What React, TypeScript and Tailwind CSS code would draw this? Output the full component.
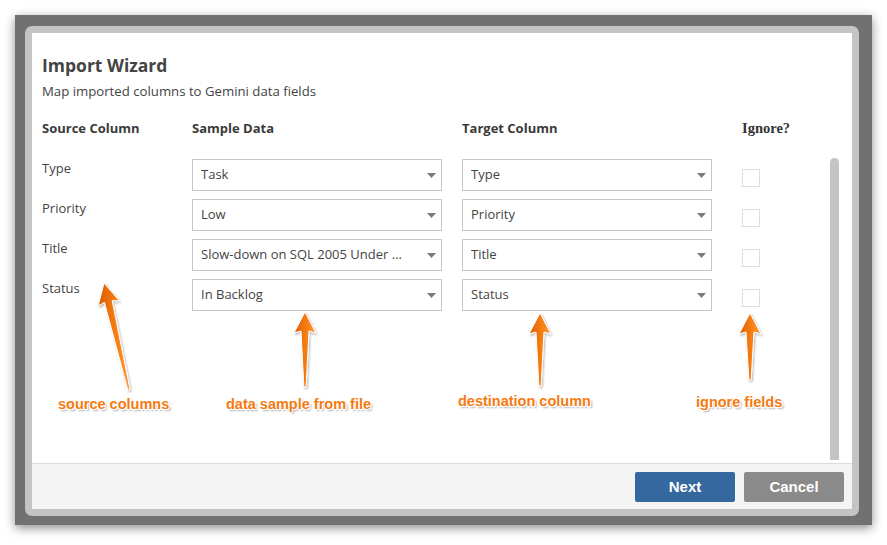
import React from "react";

type Pt = [number, number];

const rows = [
  { source: "Type", sample: "Task", target: "Type" },
  { source: "Priority", sample: "Low", target: "Priority" },
  { source: "Title", sample: "Slow-down on SQL 2005 Under ...", target: "Title" },
  { source: "Status", sample: "In Backlog", target: "Status" },
];

const arrows: { tip: Pt; tail: Pt }[] = [
  { tip: [104, 283], tail: [129, 390] },
  { tip: [305, 312], tail: [305, 387] },
  { tip: [540, 313], tail: [540, 386] },
  { tip: [750, 313], tail: [750, 380] },
];

// tapering arrow: wide head at the tip, thin tail
function arrowPath(tip: Pt, tail: Pt) {
  const dx = tail[0] - tip[0];
  const dy = tail[1] - tip[1];
  const len = Math.hypot(dx, dy);
  const ux = dx / len;
  const uy = dy / len;
  const px = -uy;
  const py = ux;
  const at = (d: number, w: number): string =>
    `${(tip[0] + ux * d + px * w).toFixed(1)} ${(tip[1] + uy * d + py * w).toFixed(1)}`;
  return [
    `M ${at(0, 0)}`,
    `L ${at(21, 11)}`,
    `L ${at(19, 4)}`,
    `L ${at(len, 1.1)}`,
    `L ${at(len, -1.1)}`,
    `L ${at(19, -4)}`,
    `L ${at(21, -11)}`,
    "Z",
  ].join(" ");
}

const Select = ({ value }: { value: string }) => (
  <div className="flex h-[32px] w-[250px] items-center border border-[#c6c6c6] bg-white pl-[8px] pr-[5px]">
    <span className="flex-1 truncate text-[13px] text-[#444]">{value}</span>
    <svg width="9" height="5" viewBox="0 0 9 5" className="shrink-0">
      <path d="M0 0 L9 0 L4.5 5 Z" fill="#7a7a7a" />
    </svg>
  </div>
);

const Note = ({ left, top, text }: { left: number; top: number; text: string }) => (
  <span
    className="absolute whitespace-nowrap text-[14.5px] font-bold leading-[18px] text-[#f47a10] [font-family:'Liberation_Sans',Arial,sans-serif] [text-shadow:1px_1px_0_#fff,-1px_-1px_0_#fff,1px_-1px_0_#fff,-1px_1px_0_#fff,2px_2px_2px_rgba(0,0,0,0.35)]"
    style={{ left, top }}
  >
    {text}
  </span>
);

export default function App() {
  return (
    <div className="relative h-[545px] w-[887px] overflow-hidden bg-white [font-family:'Open_Sans',sans-serif]">
      <div className="ml-[15px] mt-[15px] h-[510px] w-[857px] bg-[#717171] pl-[10px] pt-[11px] shadow-[0_3px_10px_rgba(0,0,0,0.45)]">
        <div className="h-[490px] w-[834px] rounded-[7px] bg-[#c4c4c4] p-[7px]">
          <div className="flex h-full flex-col bg-white">
            <div className="relative flex-1 pl-[10px] pt-[20px]">
              <h1 className="text-[17.5px] font-bold leading-[24px] text-[#444]">Import Wizard</h1>
              <p className="mt-[5px] text-[13.2px] leading-[18px] text-[#444]">
                Map imported columns to Gemini data fields
              </p>

              <div className="mt-[19px] flex text-[13px] font-bold leading-[18px] text-[#3a3a3a]">
                <div className="w-[150px]">Source Column</div>
                <div className="w-[250px]">Sample Data</div>
                <div className="ml-[20px] w-[250px]">Target Column</div>
                <div className="ml-[30px] text-[14.5px] text-[#333] [font-family:'Liberation_Serif',serif]">Ignore?</div>
              </div>

              <div className="mt-[22px] flex flex-col gap-[8px]">
                {rows.map((r) => (
                  <div key={r.source} className="flex h-[32px] items-start">
                    <div className="w-[150px] text-[13px] leading-[18px] text-[#444]">{r.source}</div>
                    <Select value={r.sample} />
                    <div className="ml-[20px]">
                      <Select value={r.target} />
                    </div>
                    <div className="ml-[30px] mt-[10px] h-[18px] w-[18px] border border-[#dedede] bg-white" />
                  </div>
                ))}
              </div>

              <div className="absolute bottom-[3px] right-[13px] top-[125px] w-[9px] rounded-t-full bg-[#c4c4c4]" />
            </div>

            <div className="flex h-[46px] items-center justify-end gap-[9px] border-t border-[#dcdcdc] bg-[#f4f4f4] pr-[8px]">
              <button className="h-[30px] w-[100px] rounded-[2px] bg-[#34689f] pt-[1px] text-[15px] font-bold text-white [font-family:'Liberation_Sans',sans-serif]">
                Next
              </button>
              <button className="h-[30px] w-[100px] rounded-[2px] bg-[#8a8a8a] pt-[1px] text-[15px] font-bold text-white [font-family:'Liberation_Sans',sans-serif]">
                Cancel
              </button>
            </div>
          </div>
        </div>
      </div>

      <svg
        className="pointer-events-none absolute left-0 top-0"
        width="887"
        height="545"
        viewBox="0 0 887 545"
      >
        <defs>
          <linearGradient id="orange" x1="0" y1="0" x2="1" y2="0">
            <stop offset="0" stopColor="#dc5c00" />
            <stop offset="0.55" stopColor="#f77c12" />
            <stop offset="1" stopColor="#ff9a38" />
          </linearGradient>
          <filter id="sh" x="-50%" y="-20%" width="200%" height="140%">
            <feDropShadow dx="1" dy="1.5" stdDeviation="1.2" floodColor="#000" floodOpacity="0.3" />
          </filter>
        </defs>
        {arrows.map((a, i) => (
          <path
            key={i}
            d={arrowPath(a.tip, a.tail)}
            fill="url(#orange)"
            stroke="#fff"
            strokeWidth="1"
            strokeLinejoin="round"
            filter="url(#sh)"
          />
        ))}
      </svg>

      <Note left={58} top={395} text="source columns" />
      <Note left={226} top={395} text="data sample from file" />
      <Note left={458} top={392} text="destination column" />
      <Note left={696} top={393} text="ignore fields" />
    </div>
  );
}
